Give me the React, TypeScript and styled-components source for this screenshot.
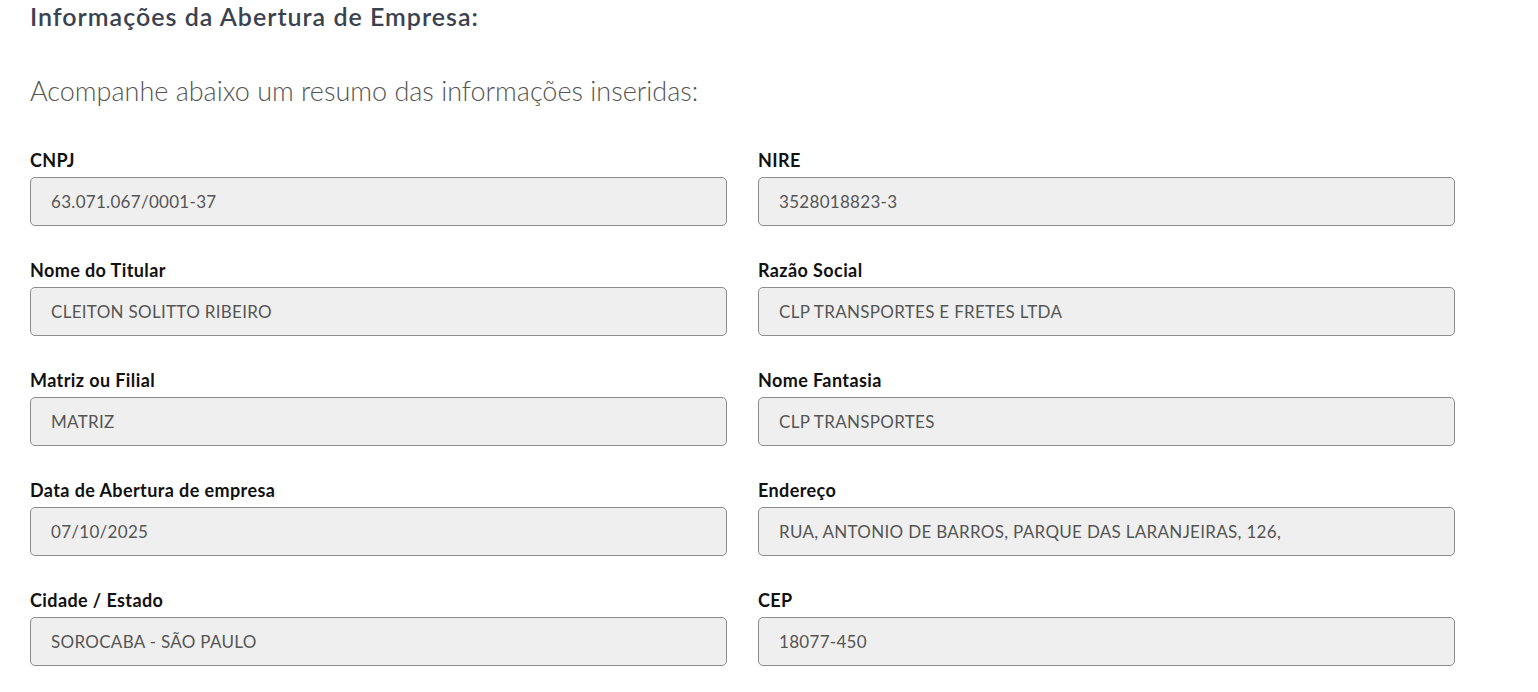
import React from 'react';
import styled, {createGlobalStyle} from 'styled-components';

const GlobalStyle = createGlobalStyle`
  body {
    margin: 0;
    background: #fff;
    font-family: Lato, "Open Sans", sans-serif;
  }
`;

const Page = styled.div`
  padding: 1px 0 0 30px;
  width: 1425px;
`;

const Title = styled.h2`
  margin: 0;
  font-size: 25px;
  line-height: 30px;
  letter-spacing: 1px;
  font-weight: 600;
  color: #3a4250;
`;

const Subtitle = styled.p`
  margin: 44px 0 0;
  font-size: 27px;
  line-height: 32px;
  font-weight: 300;
  color: #555;
`;

const Grid = styled.div`
  display: grid;
  grid-template-columns: 697px 697px;
  column-gap: 31px;
  row-gap: 34px;
  margin-top: 43px;
`;

const Field = styled.div`
  display: flex;
  flex-direction: column;
`;

const Label = styled.label`
  font-size: 18px;
  line-height: 20px;
  letter-spacing: 0.4px;
  font-weight: 700;
  color: #111;
  margin-bottom: 7px;
`;

const Input = styled.div`
  box-sizing: border-box;
  height: 49px;
  padding: 0 20px;
  display: flex;
  align-items: center;
  background: #efefef;
  border: 1px solid #8c8c8c;
  border-radius: 5px;
  font-size: 17px;
  letter-spacing: 0.3px;
  color: #555;
`;

const fields: [string, string][] = [
  ['CNPJ', '63.071.067/0001-37'],
  ['NIRE', '3528018823-3'],
  ['Nome do Titular', 'CLEITON SOLITTO RIBEIRO'],
  ['Razão Social', 'CLP TRANSPORTES E FRETES LTDA'],
  ['Matriz ou Filial', 'MATRIZ'],
  ['Nome Fantasia', 'CLP TRANSPORTES'],
  ['Data de Abertura de empresa', '07/10/2025'],
  ['Endereço', 'RUA, ANTONIO DE BARROS, PARQUE DAS LARANJEIRAS, 126,'],
  ['Cidade / Estado', 'SOROCABA - SÃO PAULO'],
  ['CEP', '18077-450'],
];

function App() {
  return (
    <Page>
      <GlobalStyle />
      <Title>Informações da Abertura de Empresa:</Title>
      <Subtitle>Acompanhe abaixo um resumo das informações inseridas:</Subtitle>
      <Grid>
        {fields.map(([label, value]) => (
          <Field key={label}>
            <Label>{label}</Label>
            <Input>{value}</Input>
          </Field>
        ))}
      </Grid>
    </Page>
  );
}

export default App;
